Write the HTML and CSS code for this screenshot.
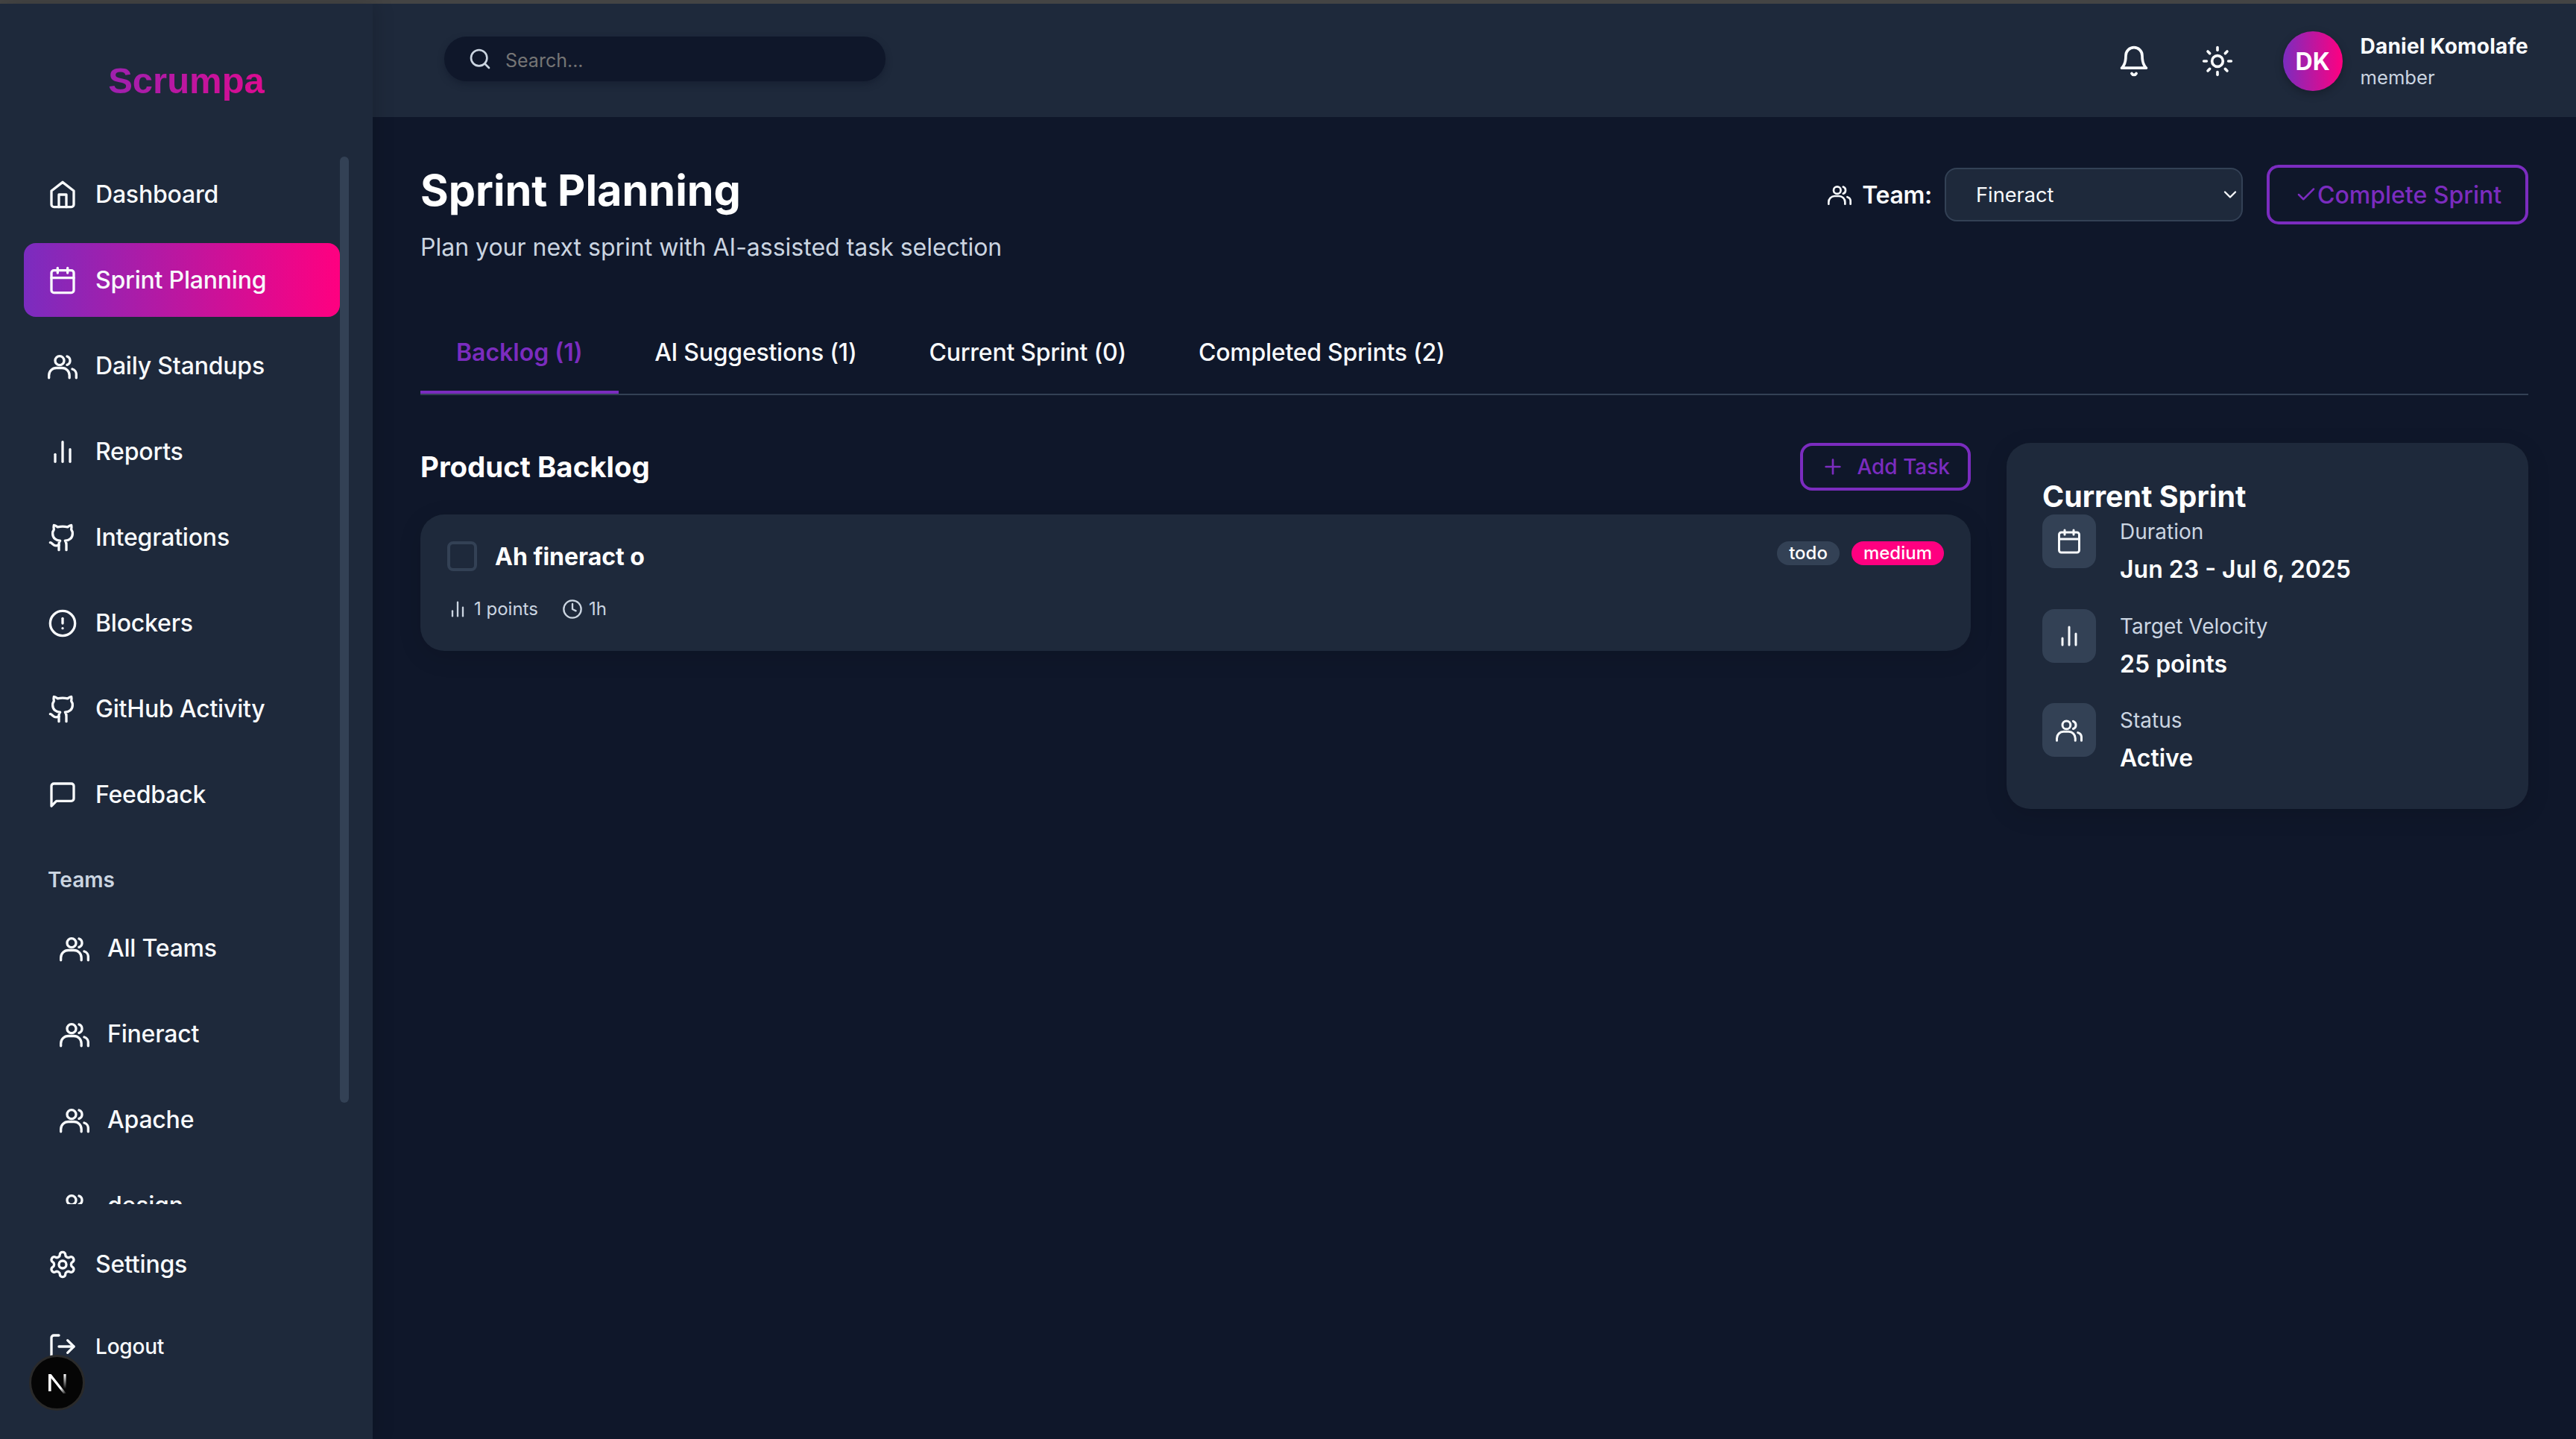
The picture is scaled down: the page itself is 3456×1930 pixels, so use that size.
FILE: index.html
```html
<!DOCTYPE html>
<html lang="en">
<head>
    <meta charset="UTF-8">
    <meta name="viewport" content="width=device-width, initial-scale=1.0">
    <title>Scrumpa - Sprint Planning</title>
    <link rel="stylesheet" href="styles.css">
</head>
<body>
    <svg class="icon-defs" xmlns="http://www.w3.org/2000/svg">
        <symbol id="i-home" viewBox="0 0 24 24"><path d="m3 9 9-7 9 7v11a2 2 0 0 1-2 2H5a2 2 0 0 1-2-2z"/><polyline points="9 22 9 12 15 12 15 22"/></symbol>
        <symbol id="i-calendar" viewBox="0 0 24 24"><rect x="3" y="4" width="18" height="18" rx="2"/><line x1="16" y1="2" x2="16" y2="6"/><line x1="8" y1="2" x2="8" y2="6"/><line x1="3" y1="10" x2="21" y2="10"/></symbol>
        <symbol id="i-users" viewBox="0 0 24 24"><circle cx="9.6" cy="7.6" r="3.6"/><path d="M15.6 4.2a3.6 3.6 0 0 1 0 6.8"/><path d="M1 21.5v-2a6 6 0 0 1 6-6h4.5a6 6 0 0 1 6 6v2"/><path d="M19.8 14.4a4.5 4.5 0 0 1 3.2 4.6v2.5"/></symbol>
        <symbol id="i-chart" viewBox="0 0 24 24"><line x1="18" y1="20" x2="18" y2="10"/><line x1="12" y1="20" x2="12" y2="4"/><line x1="6" y1="20" x2="6" y2="14"/></symbol>
        <symbol id="i-github" viewBox="0 0 24 24"><path d="M15 22v-4a4.8 4.8 0 0 0-1-3.5c3 0 6-2 6-5.5.08-1.25-.27-2.48-1-3.5.28-1.15.28-2.35 0-3.5 0 0-1 0-3 1.5-2.64-.5-5.36-.5-8 0C6 2 5 2 5 2c-.3 1.15-.3 2.35 0 3.5A5.403 5.403 0 0 0 4 9c0 3.5 3 5.5 6 5.5-.39.49-.68 1.05-.85 1.65-.17.6-.22 1.23-.15 1.85v4"/><path d="M9 18c-4.51 2-5-2-7-2"/></symbol>
        <symbol id="i-alert" viewBox="0 0 24 24"><circle cx="12" cy="12" r="10"/><line x1="12" y1="8" x2="12" y2="12"/><line x1="12" y1="16" x2="12.01" y2="16"/></symbol>
        <symbol id="i-message" viewBox="0 0 24 24"><path d="M21 15a2 2 0 0 1-2 2H7l-4 4V5a2 2 0 0 1 2-2h14a2 2 0 0 1 2 2z"/></symbol>
        <symbol id="i-settings" viewBox="0 0 24 24"><path d="M12.22 2h-.44a2 2 0 0 0-2 2v.18a2 2 0 0 1-1 1.73l-.43.25a2 2 0 0 1-2 0l-.15-.08a2 2 0 0 0-2.73.73l-.22.38a2 2 0 0 0 .73 2.73l.15.1a2 2 0 0 1 1 1.72v.51a2 2 0 0 1-1 1.74l-.15.09a2 2 0 0 0-.73 2.73l.22.38a2 2 0 0 0 2.73.73l.15-.08a2 2 0 0 1 2 0l.43.25a2 2 0 0 1 1 1.73V20a2 2 0 0 0 2 2h.44a2 2 0 0 0 2-2v-.18a2 2 0 0 1 1-1.73l.43-.25a2 2 0 0 1 2 0l.15.08a2 2 0 0 0 2.73-.73l.22-.39a2 2 0 0 0-.73-2.73l-.15-.08a2 2 0 0 1-1-1.74v-.5a2 2 0 0 1 1-1.74l.15-.09a2 2 0 0 0 .73-2.73l-.22-.38a2 2 0 0 0-2.73-.73l-.15.08a2 2 0 0 1-2 0l-.43-.25a2 2 0 0 1-1-1.73V4a2 2 0 0 0-2-2z"/><circle cx="12" cy="12" r="3"/></symbol>
        <symbol id="i-logout" viewBox="0 0 24 24"><path d="M9 21H5a2 2 0 0 1-2-2V5a2 2 0 0 1 2-2h4"/><polyline points="16 17 21 12 16 7"/><line x1="21" y1="12" x2="9" y2="12"/></symbol>
        <symbol id="i-search" viewBox="0 0 24 24"><circle cx="11" cy="11" r="8"/><path d="m21 21-4.3-4.3"/></symbol>
        <symbol id="i-bell" viewBox="0 0 24 24"><path d="M6 8a6 6 0 0 1 12 0c0 7 3 9 3 9H3s3-2 3-9"/><path d="M10.3 21a1.94 1.94 0 0 0 3.4 0"/></symbol>
        <symbol id="i-sun" viewBox="0 0 24 24"><circle cx="12" cy="12" r="4"/><path d="M12 2v2"/><path d="M12 20v2"/><path d="m4.93 4.93 1.41 1.41"/><path d="m17.66 17.66 1.41 1.41"/><path d="M2 12h2"/><path d="M20 12h2"/><path d="m6.34 17.66-1.41 1.41"/><path d="m19.07 4.93-1.41 1.41"/></symbol>
        <symbol id="i-check" viewBox="0 0 24 24"><path d="M20 6 9 17l-5-5"/></symbol>
        <symbol id="i-plus" viewBox="0 0 24 24"><path d="M5 12h14"/><path d="M12 5v14"/></symbol>
        <symbol id="i-clock" viewBox="0 0 24 24"><circle cx="12" cy="12" r="10"/><polyline points="12 6 12 12 16 14"/></symbol>
        <symbol id="i-chevron" viewBox="0 0 24 24"><path d="m6 9 6 6 6-6"/></symbol>
    </svg>

    <div class="top-strip"></div>

    <div class="app">
        <aside class="sidebar">
            <div class="logo">Scrumpa</div>

            <nav class="nav-scroll">
                <a class="nav-item"><svg class="icon"><use href="#i-home"/></svg>Dashboard</a>
                <a class="nav-item active"><svg class="icon"><use href="#i-calendar"/></svg>Sprint Planning</a>
                <a class="nav-item"><svg class="icon"><use href="#i-users"/></svg>Daily Standups</a>
                <a class="nav-item"><svg class="icon"><use href="#i-chart"/></svg>Reports</a>
                <a class="nav-item"><svg class="icon"><use href="#i-github"/></svg>Integrations</a>
                <a class="nav-item"><svg class="icon"><use href="#i-alert"/></svg>Blockers</a>
                <a class="nav-item"><svg class="icon"><use href="#i-github"/></svg>GitHub Activity</a>
                <a class="nav-item"><svg class="icon"><use href="#i-message"/></svg>Feedback</a>

                <div class="nav-label">Teams</div>
                <div class="team-list">
                    <a class="nav-item team"><svg class="icon"><use href="#i-users"/></svg>All Teams</a>
                    <a class="nav-item team"><svg class="icon"><use href="#i-users"/></svg>Fineract</a>
                    <a class="nav-item team"><svg class="icon"><use href="#i-users"/></svg>Apache</a>
                    <a class="nav-item team"><svg class="icon"><use href="#i-users"/></svg>design</a>
                </div>
            </nav>
            <div class="scroll-thumb"></div>

            <div class="sidebar-footer">
                <a class="nav-item"><svg class="icon"><use href="#i-settings"/></svg>Settings</a>
                <a class="nav-item logout"><svg class="icon"><use href="#i-logout"/></svg>Logout</a>
            </div>

            <div class="dev-badge">
                <svg class="dev-logo" viewBox="0 0 32 32">
                    <defs>
                        <linearGradient id="fade-a" x1="0" y1="0" x2="1" y2="1">
                            <stop offset="0.7" stop-color="#ffffff"/>
                            <stop offset="1" stop-color="#ffffff" stop-opacity="0"/>
                        </linearGradient>
                        <linearGradient id="fade-b" x1="0" y1="0" x2="0" y2="1">
                            <stop offset="0" stop-color="#ffffff"/>
                            <stop offset="0.9" stop-color="#ffffff" stop-opacity="0"/>
                        </linearGradient>
                    </defs>
                    <path fill="url(#fade-a)" d="M4 4h3.6L28 30h-4L7.6 9.4V27H4z"/>
                    <rect x="24.4" y="4" width="3.2" height="22" fill="url(#fade-b)"/>
                </svg>
            </div>
        </aside>

        <div class="main">
            <header class="topbar">
                <div class="search">
                    <svg class="icon search-icon"><use href="#i-search"/></svg>
                    <input type="text" placeholder="Search...">
                </div>
                <div class="topbar-right">
                    <svg class="icon topbar-icon"><use href="#i-bell"/></svg>
                    <svg class="icon topbar-icon"><use href="#i-sun"/></svg>
                    <div class="user">
                        <div class="avatar">DK</div>
                        <div>
                            <div class="user-name">Daniel Komolafe</div>
                            <div class="user-role">member</div>
                        </div>
                    </div>
                </div>
            </header>

            <main class="page">
                <div class="page-head">
                    <div>
                        <h1>Sprint Planning</h1>
                        <p class="subtitle">Plan your next sprint with AI-assisted task selection</p>
                    </div>
                    <div class="page-actions">
                        <svg class="icon team-icon"><use href="#i-users"/></svg>
                        <span class="team-label">Team:</span>
                        <div class="select-wrap">
                            <select>
                                <option>Fineract</option>
                                <option>Apache</option>
                            </select>
                            <svg class="icon select-chevron"><use href="#i-chevron"/></svg>
                        </div>
                        <button class="btn btn-complete"><svg class="icon check-icon"><use href="#i-check"/></svg>Complete Sprint</button>
                    </div>
                </div>

                <div class="tabs">
                    <div class="tab active">Backlog (1)</div>
                    <div class="tab">AI Suggestions (1)</div>
                    <div class="tab">Current Sprint (0)</div>
                    <div class="tab">Completed Sprints (2)</div>
                </div>

                <div class="panel-grid">
                    <section>
                        <div class="backlog-head">
                            <h2>Product Backlog</h2>
                            <button class="btn btn-add"><svg class="icon plus-icon"><use href="#i-plus"/></svg>Add Task</button>
                        </div>
                        <div class="task-card">
                            <div class="task-top">
                                <div class="task-title-wrap">
                                    <span class="checkbox"></span>
                                    <span class="task-title">Ah fineract o</span>
                                </div>
                                <div class="badges">
                                    <span class="badge badge-status">todo</span>
                                    <span class="badge badge-priority">medium</span>
                                </div>
                            </div>
                            <div class="task-meta">
                                <span class="meta-item"><svg class="icon meta-icon"><use href="#i-chart"/></svg>1 points</span>
                                <span class="meta-item"><svg class="icon meta-icon"><use href="#i-clock"/></svg>1h</span>
                            </div>
                        </div>
                    </section>

                    <aside class="sprint-card">
                        <h3>Current Sprint</h3>
                        <div class="sprint-row">
                            <div class="sprint-icon"><svg class="icon"><use href="#i-calendar"/></svg></div>
                            <div class="sprint-text">
                                <div class="sprint-label">Duration</div>
                                <div class="sprint-value">Jun 23 - Jul 6, 2025</div>
                            </div>
                        </div>
                        <div class="sprint-row">
                            <div class="sprint-icon"><svg class="icon"><use href="#i-chart"/></svg></div>
                            <div class="sprint-text">
                                <div class="sprint-label">Target Velocity</div>
                                <div class="sprint-value">25 points</div>
                            </div>
                        </div>
                        <div class="sprint-row">
                            <div class="sprint-icon"><svg class="icon"><use href="#i-users"/></svg></div>
                            <div class="sprint-text">
                                <div class="sprint-label">Status</div>
                                <div class="sprint-value">Active</div>
                            </div>
                        </div>
                    </aside>
                </div>
            </main>
        </div>
    </div>
</body>
</html>
```

FILE: styles.css
```css
* {
    box-sizing: border-box;
}
html, body {
    height: 100%;
}
body {
    margin: 0;
    background-color: #0f172a;
    color: #f8fafc;
    font-family: Inter, "Liberation Sans", sans-serif;
    overflow: hidden;
    display: flex;
    flex-direction: column;
}
.icon-defs {
    display: none;
}
.icon {
    width: 40px;
    height: 40px;
    flex-shrink: 0;
    fill: none;
    stroke: currentColor;
    stroke-width: 2;
    stroke-linecap: round;
    stroke-linejoin: round;
}
.top-strip {
    height: 5px;
    background-color: #444444;
    flex-shrink: 0;
}
.app {
    flex: 1;
    display: flex;
    min-height: 0;
}

/* sidebar */
.sidebar {
    width: 500px;
    flex-shrink: 0;
    background-color: #1e293b;
    display: flex;
    flex-direction: column;
    position: relative;
    padding-left: 32px;
    padding-right: 32px;
    box-shadow: 4px 0 24px rgba(0, 0, 0, 0.15);
    z-index: 1;
}
.logo {
    height: 206px;
    flex-shrink: 0;
    padding-top: 72px;
    line-height: 62px;
    text-align: center;
    font-family: "Liberation Sans", Arial, sans-serif;
    font-size: 49px;
    font-weight: 700;
    background: linear-gradient(90deg, #7b2cbf, #ff0080);
    -webkit-background-clip: text;
    background-clip: text;
    color: transparent;
}
.nav-scroll {
    flex: 1;
    min-height: 0;
    overflow: hidden;
    display: flex;
    flex-direction: column;
    gap: 16px;
    padding-right: 12px;
}
.scroll-thumb {
    position: absolute;
    left: 456px;
    top: 205px;
    width: 12px;
    height: 1269px;
    border-radius: 6px;
    background-color: #334155;
}
.nav-item {
    display: flex;
    align-items: center;
    gap: 24px;
    height: 99px;
    flex-shrink: 0;
    padding-left: 32px;
    border-radius: 16px;
    font-size: 32px;
    font-weight: 500;
    letter-spacing: -0.2px;
    color: #f8fafc;
}
.nav-item.active {
    background: linear-gradient(90deg, #7b2cbf, #ff0080);
}
.nav-label {
    padding-left: 32px;
    margin-top: 29px;
    margin-bottom: 6px;
    font-size: 28px;
    line-height: 40px;
    font-weight: 600;
    color: #cbd5e1;
    flex-shrink: 0;
}
.team-list {
    display: flex;
    flex-direction: column;
    gap: 16px;
}
.nav-item.team {
    padding-left: 48px;
}
.sidebar-footer {
    flex-shrink: 0;
    display: flex;
    flex-direction: column;
    gap: 16px;
    padding-top: 31px;
    padding-bottom: 79px;
    padding-right: 12px;
}
.nav-item.logout {
    height: 90px;
    font-size: 28px;
}
.dev-badge {
    position: absolute;
    left: 39px;
    top: 1812px;
    width: 75px;
    height: 75px;
    border-radius: 50%;
    background-color: #050505;
    border: 3px solid #2a2a2a;
    display: flex;
    align-items: center;
    justify-content: center;
}
.dev-logo {
    width: 32px;
    height: 32px;
}

/* top bar */
.main {
    flex: 1;
    min-width: 0;
    display: flex;
    flex-direction: column;
}
.topbar {
    height: 152px;
    flex-shrink: 0;
    background-color: #1e293b;
    display: flex;
    align-items: center;
    justify-content: space-between;
    padding: 0 64px 0 96px;
}
.search {
    width: 592px;
    height: 60px;
    margin-top: -4px;
    border-radius: 30px;
    background-color: #0f172a;
    box-shadow: 0 4px 8px rgba(15, 23, 42, 0.5);
    display: flex;
    align-items: center;
    padding-left: 32px;
    gap: 16px;
}
.search-icon {
    width: 32px;
    height: 32px;
    color: #cbd5e1;
}
.search input {
    flex: 1;
    min-width: 0;
    border: none;
    outline: none;
    background: transparent;
    color: #f8fafc;
    font-family: inherit;
    font-size: 25px;
    padding-top: 4px;
}
.topbar-right {
    display: flex;
    align-items: center;
    gap: 68px;
    margin-top: 2px;
}
.topbar-icon {
    width: 44px;
    height: 44px;
}
.user {
    display: flex;
    align-items: center;
    gap: 24px;
    margin-left: -2px;
}
.avatar {
    width: 80px;
    height: 80px;
    border-radius: 50%;
    background: linear-gradient(90deg, #7b2cbf, #ff0080);
    display: flex;
    align-items: center;
    justify-content: center;
    font-size: 32px;
    font-weight: 700;
    color: #ffffff;
    box-shadow: 0 4px 12px rgba(0, 0, 0, 0.25);
}
.user-name {
    font-size: 28px;
    line-height: 40px;
    font-weight: 700;
    letter-spacing: 0.2px;
}
.user-role {
    font-size: 25.6px;
    line-height: 36px;
    margin-top: 4px;
    color: #cbd5e1;
}

/* page */
.page {
    flex: 1;
    padding: 64px 64px 0;
}
.page-head {
    display: flex;
    justify-content: space-between;
    align-items: flex-start;
}
h1 {
    margin: 0;
    font-size: 57.6px;
    line-height: 68px;
    font-weight: 700;
    color: #ffffff;
}
.subtitle {
    margin: 19px 0 0;
    font-size: 32px;
    line-height: 48px;
    color: #cbd5e1;
}
.page-actions {
    display: flex;
    align-items: center;
}
.team-icon {
    width: 32px;
    height: 32px;
}
.team-label {
    margin-left: 14px;
    font-size: 32px;
    font-weight: 600;
    letter-spacing: -0.3px;
}
.select-wrap {
    position: relative;
    margin-left: 17px;
}
.select-wrap select {
    display: block;
    width: 400px;
    height: 72px;
    padding: 0 40px;
    appearance: none;
    -webkit-appearance: none;
    background-color: #1e293b;
    border: 2px solid #334155;
    border-radius: 16px;
    color: #f8fafc;
    font-family: inherit;
    font-size: 27.2px;
}
.select-chevron {
    position: absolute;
    right: 3px;
    top: 22px;
    width: 28px;
    height: 28px;
    pointer-events: none;
}
.btn {
    display: inline-flex;
    align-items: center;
    background: transparent;
    border: 4px solid #7b2cbf;
    border-radius: 16px;
    color: #7b2cbf;
    font-family: inherit;
    font-weight: 500;
    cursor: pointer;
}
.btn-complete {
    margin-left: 32px;
    width: 351px;
    height: 80px;
    padding: 0 0 0 34px;
    font-size: 32px;
}
.check-icon {
    width: 30px;
    height: 30px;
}
.tabs {
    display: flex;
    margin-top: 60px;
    border-bottom: 2px solid #334155;
}
.tab {
    padding: 33px 48.5px 27px;
    font-size: 32px;
    line-height: 48px;
    font-weight: 500;
    letter-spacing: -0.25px;
    border-bottom: 4px solid transparent;
}
.tab.active {
    padding-left: 48px;
    padding-right: 48px;
    font-weight: 600;
    letter-spacing: 0;
    color: #7b2cbf;
    border-bottom-color: #7b2cbf;
}
.panel-grid {
    display: grid;
    grid-template-columns: 1fr 700px;
    gap: 48px;
    margin-top: 64px;
    align-items: start;
}
.backlog-head {
    display: flex;
    justify-content: space-between;
    align-items: center;
    margin-bottom: 32px;
}
h2 {
    margin: 0;
    font-size: 38.4px;
    font-weight: 700;
    color: #ffffff;
}
.btn-add {
    height: 64px;
    padding: 0 24px;
    gap: 16px;
    font-size: 28px;
}
.plus-icon {
    width: 32px;
    height: 32px;
}
.task-card {
    height: 183px;
    padding: 36px;
    background-color: #1e293b;
    border-radius: 32px;
    box-shadow: 0 8px 32px rgba(0, 0, 0, 0.12);
}
.task-top {
    display: flex;
    justify-content: space-between;
    align-items: flex-start;
}
.task-title-wrap {
    display: flex;
    align-items: center;
    gap: 24px;
}
.checkbox {
    width: 40px;
    height: 40px;
    border: 4px solid #334155;
    border-radius: 8px;
}
.task-title {
    font-size: 32px;
    font-weight: 700;
    color: #ffffff;
}
.badges {
    display: flex;
    gap: 16px;
}
.badge {
    height: 32px;
    padding: 0 16px;
    border-radius: 16px;
    font-size: 24px;
    line-height: 32px;
    font-weight: 500;
    color: #ffffff;
}
.badge-status {
    background-color: #334155;
}
.badge-priority {
    background-color: #ff0080;
}
.task-meta {
    display: flex;
    gap: 32px;
    margin-top: 33px;
    font-size: 24px;
    line-height: 36px;
    color: #cbd5e1;
}
.meta-item {
    display: flex;
    align-items: center;
    gap: 8px;
}
.meta-icon {
    width: 28px;
    height: 28px;
}
.sprint-card {
    padding: 48px 48px 44px;
    background-color: #1e293b;
    border-radius: 32px;
    box-shadow: 0 8px 32px rgba(0, 0, 0, 0.12);
}
h3 {
    margin: 0;
    font-size: 39.4px;
    line-height: 48px;
    font-weight: 700;
    color: #ffffff;
}
.sprint-row {
    display: flex;
    gap: 32px;
    margin-bottom: 28.5px;
}
.sprint-row:last-child {
    margin-bottom: 0;
}
.sprint-icon {
    width: 72px;
    height: 72px;
    border-radius: 16px;
    background-color: #334155;
    display: flex;
    align-items: center;
    justify-content: center;
    flex-shrink: 0;
}
.sprint-icon .icon {
    width: 36px;
    height: 36px;
}
.sprint-text {
    padding-top: 2px;
}
.sprint-label {
    font-size: 28px;
    line-height: 42px;
    margin-bottom: 6px;
    color: #cbd5e1;
}
.sprint-value {
    font-size: 32px;
    line-height: 48px;
    font-weight: 600;
    color: #ffffff;
}
```
